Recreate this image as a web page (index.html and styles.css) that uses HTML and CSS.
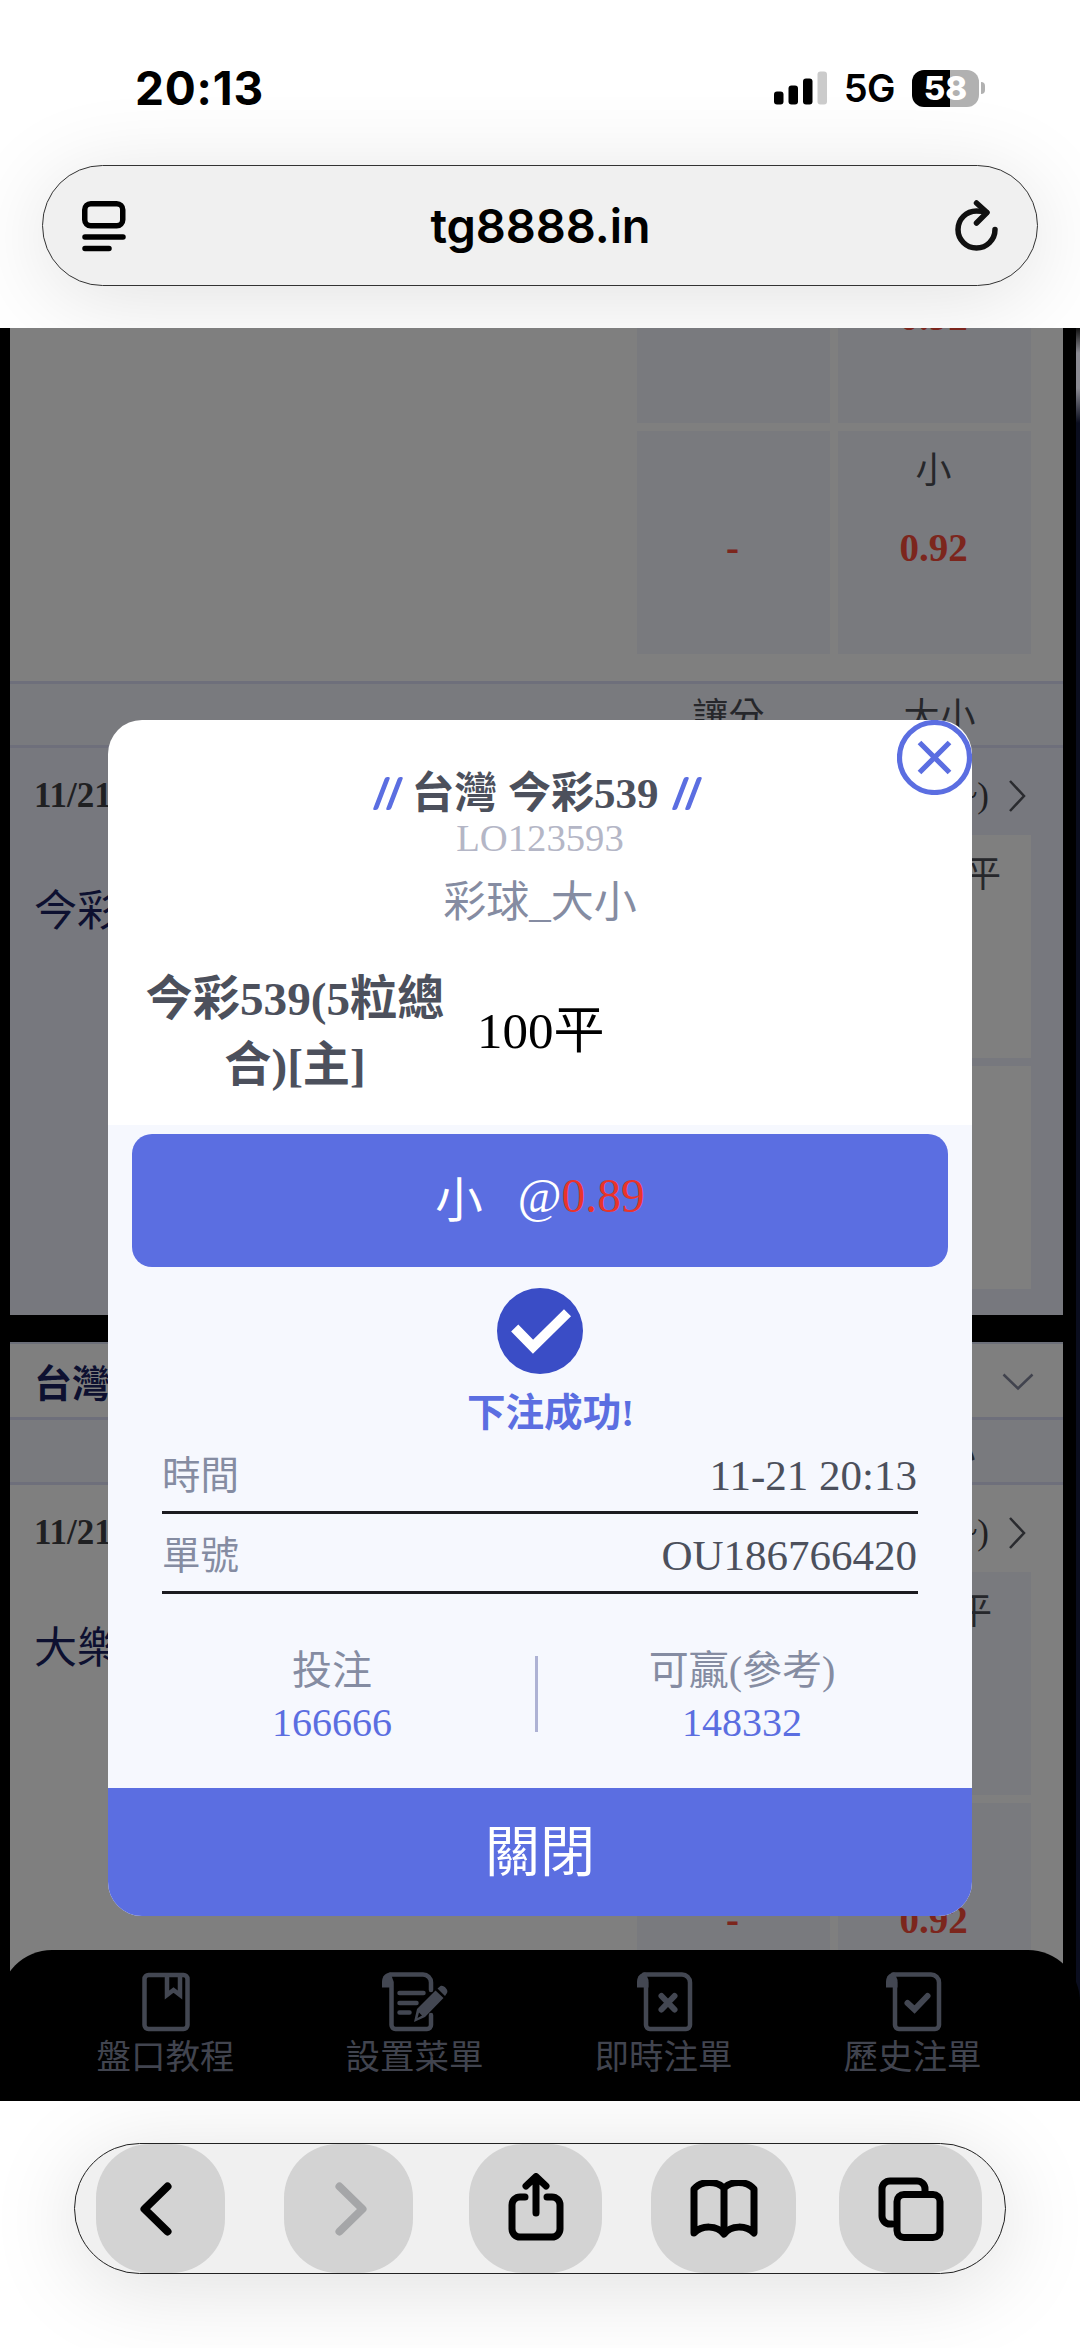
FILE: index.html
```html
<!DOCTYPE html>
<html lang="zh-Hant">
<head>
<meta charset="utf-8">
<title>tg8888.in</title>
<link rel="stylesheet" href="styles.css">
</head>
<body>
<div class="phone">
  <header class="browser-top">
    <div class="status">
      <span class="clock">20:13</span>
      <span class="status-right">
        <svg class="signal" width="53" height="34" viewBox="0 0 53 34">
          <rect x="0" y="20.500" width="9.500" height="13" rx="3"/>
          <rect x="14.500" y="14.500" width="9.500" height="19" rx="3"/>
          <rect x="29" y="7.500" width="9.500" height="26" rx="3"/>
          <rect x="43.500" y="0.500" width="9.500" height="33" rx="3" fill="#cbcbcb"/>
        </svg>
        <span class="net">5G</span>
        <span class="battery">58</span>
        <span class="battery-tip"></span>
      </span>
    </div>
    <div class="url-bar">
      <svg class="reader" width="44" height="52" viewBox="0 0 44 52" fill="none" stroke="#000" stroke-width="5.500" stroke-linecap="round">
        <rect x="2.750" y="3.750" width="38" height="22" rx="6"/>
        <path d="M3 37h38M3 48.500h24"/>
      </svg>
      <span class="host">tg8888.in</span>
      <svg class="reload" width="44" height="52" viewBox="0 0 44 52" fill="none" stroke="#111" stroke-width="5.500" stroke-linecap="round" stroke-linejoin="round">
        <path d="M40 29.500a18.500 18.500 0 1 1-18.500-18.500c4 0 7 .500 10 1.500"/>
        <path d="M21.500 3l10.500 9.500L21.500 23"/>
      </svg>
    </div>
  </header>

  <main class="page">
    <div class="side-tab"></div>
    <div class="list">
      <section class="odds first">
        <div class="cells">
          <div class="cell"><b>-</b></div>
          <div class="cell"><b>0.92</b></div>
          <div class="cell"><b>-</b></div>
          <div class="cell"><span>小</span><b>0.92</b></div>
        </div>
      </section>
      <div class="cols"><span>讓分</span><span>大小</span></div>
      <section class="odds tinted">
        <div class="when"><b>11/21 20:30</b><span class="more">(更多玩法~)</span>
          <svg width="18" height="32" viewBox="0 0 18 32"><path d="M2 1l14 15L2 31"/></svg></div>
        <div class="team">今彩539</div>
        <div class="cells">
          <div class="cell"></div>
          <div class="cell"><span>大 100平</span></div>
          <div class="cell"></div>
          <div class="cell"></div>
        </div>
      </section>
      <div class="gap"></div>
      <div class="league">台灣 大樂透
        <svg width="32" height="18" viewBox="0 0 32 18"><path d="M1.500 1.500L16 15.500l14.500-14"/></svg></div>
      <div class="cols second"><span>讓分</span><span>大小</span></div>
      <section class="odds">
        <div class="when"><b>11/21 20:30</b><span class="more">(更多玩法~)</span>
          <svg width="18" height="32" viewBox="0 0 18 32"><path d="M2 1l14 15L2 31"/></svg></div>
        <div class="team">大樂透</div>
        <div class="cells">
          <div class="cell"></div>
          <div class="cell"><span>大 75平</span></div>
          <div class="cell"><b>-</b></div>
          <div class="cell"><b>0.92</b></div>
        </div>
      </section>
    </div>

    <nav class="tabs">
      <a class="tab">
        <svg width="70" height="60" viewBox="0 0 70 60"><rect x="13.500" y="3" width="43" height="54" rx="4"/><path d="M36 4v19l6.500-5 6.500 5V4"/></svg>
        <span>盤口教程</span></a>
      <a class="tab">
        <svg width="70" height="60" viewBox="0 0 70 60"><path d="M10.500 2.500H43a8 8 0 0 1 8 8V18M51 43V53a4 4 0 0 1-4 4H15.500a4 4 0 0 1-4-4V10"/><path class="solid" d="M2 15.500V10c0-6 4-9.500 8.500-9.500L13 8v7.500z"/><path d="M19.500 21h24M19.500 31h17M19.500 40.500h10"/><path class="solid" fill-rule="evenodd" d="M34 50l3-13L55.500 18.500l8 7.500L45 45zM37.500 46l4.500-2.500-3-3zM57.500 16.500l3-2.500c3-1.500 8.500 4 6.500 7l-2 3z"/></svg>
        <span>設置菜單</span></a>
      <a class="tab">
        <svg width="70" height="60" viewBox="0 0 70 60"><path d="M15 2.500H53a8 8 0 0 1 8 8V53a4 4 0 0 1-4 4H21a4 4 0 0 1-4-4V10"/><path class="solid" d="M8 15.500V10c0-6 4-9.500 8.500-9.500L19.500 8v7.500z"/><path class="mark" d="M32.500 24L45.500 37.500M45.500 24L32.500 37.500"/></svg>
        <span>即時注單</span></a>
      <a class="tab">
        <svg width="70" height="60" viewBox="0 0 70 60"><path d="M15 2.500H53a8 8 0 0 1 8 8V53a4 4 0 0 1-4 4H21a4 4 0 0 1-4-4V10"/><path class="solid" d="M8 15.500V10c0-6 4-9.500 8.500-9.500L19.500 8v7.500z"/><path class="mark" d="M29.500 31l7 6.500L49.500 24"/></svg>
        <span>歷史注單</span></a>
    </nav>

    <div class="dialog">
      <button class="close" aria-label="close"><svg width="75" height="75" viewBox="0 0 75 75"><circle cx="37.500" cy="37.500" r="35"/><path d="M22.500 22.500l30 30M52.500 22.500l-30 30"/></svg></button>
      <div class="dialog-head">
        <h1><i class="slashes"></i><span>台灣 今彩539</span><i class="slashes"></i></h1>
        <p class="code">LO123593</p>
        <p class="market">彩球_大小</p>
        <div class="pick"><strong>今彩539(5粒總合)[主]</strong><span>100平</span></div>
      </div>
      <div class="dialog-body">
        <div class="bet"><span>小</span><span>@<em>0.89</em></span></div>
        <svg class="ok" width="86" height="86" viewBox="0 0 86 86"><circle cx="43" cy="43" r="43"/><path d="M17.700 40L36 58.700 70.500 24.700"/></svg>
        <p class="success">下注成功!</p>
        <dl class="facts">
          <div><dt>時間</dt><dd>11-21 20:13</dd></div>
          <div><dt>單號</dt><dd>OU186766420</dd></div>
        </dl>
        <div class="amounts">
          <div><span>投注</span><b>166666</b></div>
          <i></i>
          <div><span>可贏(參考)</span><b>148332</b></div>
        </div>
      </div>
      <button class="dismiss">關閉</button>
    </div>
  </main>

  <footer class="browser-bottom">
    <div class="toolbar">
      <span class="tool back"><svg width="32" height="54" viewBox="0 0 32 54"><path d="M27.500 4.500L4.500 27l23 22.500"/></svg></span>
      <span class="tool forward"><svg width="32" height="54" viewBox="0 0 32 54"><path d="M4.500 4.500l23 22.500-23 22.500"/></svg></span>
      <span class="tool share"><svg width="56" height="68" viewBox="0 0 56 68"><path d="M17 24H12a8 8 0 0 0-8 8V56a8 8 0 0 0 8 8H44a8 8 0 0 0 8-8V32a8 8 0 0 0-8-8H39M28 40V4M18 13L28 3.500l10 9.500"/></svg></span>
      <span class="tool book"><svg width="68" height="58" viewBox="0 0 68 58"><path d="M34 8C27 1 12 0 4 9V53C12 45 27 45 34 54C41 45 56 45 64 53V9C56 0 41 1 34 8V53"/></svg></span>
      <span class="tool copies"><svg width="66" height="64" viewBox="0 0 66 64"><path d="M14 47H12a8 8 0 0 1-8-8V12a8 8 0 0 1 8-8H39a8 8 0 0 1 8 8v3"/><rect x="19" y="17.500" width="43" height="43" rx="7"/></svg></span>
    </div>
  </footer>
</div>
</body>
</html>
```
FILE: styles.css
```css
* { box-sizing: border-box; }
body { margin: 0; background: #fff; }
p, h1, dl, dd { margin: 0; }
button { border: 0; padding: 0; background: none; font: inherit; }

.phone {
  width: 1080px;
  height: 2348px;
  overflow: hidden;
  font-family: "Liberation Serif", "Noto Sans CJK TC", serif;
}

/* Browser chrome */
.browser-top {
  height: 328px;
  padding: 63px 42px 0;
  overflow: hidden;
  font-family: Inter, sans-serif;
}
.status {
  display: flex;
  justify-content: space-between;
  align-items: center;
  height: 50px;
  margin: 0 53px 0 93px;
}
.clock { font-size: 46px; font-weight: 700; letter-spacing: 0.800px; }
.status-right { display: flex; align-items: center; }
.net { margin-left: 17px; font-size: 38px; font-weight: 600; letter-spacing: -0.500px; }
.battery {
  width: 67px;
  height: 37px;
  margin-left: 17px;
  border-radius: 12px;
  background: linear-gradient(90deg, #000 57%, #b1b1b1 57%);
  color: #fff;
  font-size: 33px;
  font-weight: 800;
  line-height: 37px;
  text-align: center;
}
.battery-tip { width: 4px; height: 12px; margin-left: 2px; border-radius: 0 4px 4px 0; background: #b1b1b1; }
.url-bar {
  display: flex;
  justify-content: space-between;
  align-items: center;
  height: 121px;
  margin-top: 52px;
  padding: 0 38px 0 39px;
  border: 1.500px solid #333;
  border-radius: 61px;
  background: #f0f0f0;
  box-shadow: 0 12px 90px rgba(0, 0, 0, 0.120);
}
.host { font-size: 47px; font-weight: 600; letter-spacing: -0.100px; }

/* Page under the dialog */
.page { position: relative; height: 1773px; overflow: hidden; background: #000; }
.side-tab {
  position: absolute;
  top: 0;
  right: 0;
  width: 4px;
  height: 1700px;
  background: linear-gradient(#111, #8a8a92 25px, #8a8a92 60px, #0a0d1e 95px);
}
.list { width: 1053px; height: 1700px; margin-left: 10px; overflow: hidden; }
.odds { padding: 0 32px 0 24px; background: #7f7f7f; }
.first { height: 353px; overflow: hidden; }
.first .cells { margin-top: -128px; }
.cells { display: grid; grid-template-columns: 193px 193px; grid-auto-rows: 223px; gap: 8px; justify-content: end; }
.cell {
  display: flex;
  flex-direction: column;
  align-items: center;
  padding: 14px 2px 0 0;
  background: #797a7e;
  color: #26272b;
  font-size: 36px;
  line-height: 52px;
}
.cell span { height: 52px; }
.cell b { margin-top: auto; padding-bottom: 80px; color: #7c261d; font-size: 39px; line-height: 52px; }
.tinted { height: 567px; background: #77787e; }
.tinted .cell { background: #7f7f7f; }
.cols {
  display: grid;
  grid-template-columns: 193px 193px;
  gap: 18px;
  justify-content: end;
  height: 67px;
  padding: 3px 27px 0 0;
  border: solid #6e6f7b;
  border-width: 3px 0;
  background: #797a7e;
  color: #26272b;
  font-size: 36px;
  line-height: 60px;
  text-align: center;
}
.second { height: 68px; }
.when {
  display: flex;
  align-items: center;
  height: 87px;
  padding: 8px 5px 0 0;
  color: #1f2022;
  font-size: 35px;
  line-height: 40px;
}
.more { margin-left: auto; }
.when svg { margin-left: 19px; }
.when path, .league path { fill: none; stroke: #2a2b2f; stroke-width: 2.500; }
.league path { stroke: #41434e; }
.team { height: 0; color: #0d1030; font-size: 43px; line-height: 153px; }
.gap { height: 27px; background: #000; }
.league {
  display: flex;
  justify-content: space-between;
  align-items: center;
  height: 75px;
  padding: 0 29px 0 24px;
  border-top: 2px solid #6c6f79;
  background: #7f7f7f;
  color: #0d1030;
  font-size: 38px;
  font-weight: 700;
}
.league svg { margin-top: 2px; }

/* Site tab bar */
.tabs {
  position: absolute;
  inset: auto 0 0 0;
  display: grid;
  grid-template-columns: repeat(4, 249px);
  height: 151px;
  padding: 22px 41px 0;
  border-radius: 52px 52px 0 0;
  background: #000;
}
.tab { display: flex; flex-direction: column; align-items: center; color: #41444f; font-size: 34.500px; line-height: 50px; }
.tab svg { fill: none; stroke: #434752; stroke-width: 4.500; stroke-linecap: round; }
.tab .solid { fill: #434752; stroke: none; }
.tab .mark { stroke-width: 6; }

/* Bet confirmation */
.dialog {
  position: absolute;
  left: 108px;
  top: 392px;
  width: 864px;
  height: 1196px;
  border-radius: 34px;
  overflow: hidden;
  background: #fff;
}
.close { position: absolute; top: 0; right: 0.500px; width: 75px; height: 75px; }
.close svg { display: block; fill: #fff; stroke: #5b6ee1; stroke-width: 5.200; }
.dialog-head { height: 405px; padding-top: 47px; text-align: center; color: #4c505c; }
h1 { display: flex; justify-content: center; align-items: center; gap: 13px; margin-left: -5px; font-size: 43px; line-height: 54px; }
h1 span { margin-left: -5px; }
.slashes { display: flex; gap: 8px; height: 33px; padding: 0 6px; transform: skewX(-21deg); margin-bottom: 2px; }
.slashes::before, .slashes::after { content: ""; width: 5px; border-radius: 2px; background: #5b6ee1; }
.code { color: #b4b6c6; font-size: 38.700px; line-height: 35px; }
.market { color: #858ca2; font-size: 43px; line-height: 60px; margin-top: 17px; }
.pick { display: flex; align-items: center; height: 132px; margin-top: 33px; padding-left: 33px; }
.pick strong { width: 308px; font-size: 47.200px; line-height: 66px; word-break: break-all; }
.pick span { margin: 0 0 12px 28px; color: #000; font-size: 51px; }
.dialog-body { height: 663px; padding-top: 9px; background: #f6f8fe; }
.bet {
  display: flex;
  justify-content: center;
  align-items: center;
  gap: 35px;
  height: 133px;
  margin: 0 24px;
  padding-bottom: 9px;
  border-radius: 20px;
  background: #5b6ee1;
  color: #fff;
  font-size: 47.500px;
}
.bet em { color: #e9342b; font-style: normal; }
.ok { display: block; margin: 21px auto 0; fill: #3a4dc6; }
.ok path { fill: none; stroke: #fff; stroke-width: 10; }
.success { margin-top: 14px; padding-left: 21px; color: #5b6ee1; font-size: 38.600px; font-weight: 700; line-height: 50px; text-align: center; }
.facts { margin: -5px 54px 0; }
.facts div { display: flex; justify-content: space-between; align-items: center; height: 80.500px; border-bottom: 3px solid #1b1b20; }
.facts dt { color: #858ca2; font-size: 38.500px; }
.facts dd { padding-top: 7px; margin-right: 1px; color: #4c505c; font-size: 43px; }
.amounts { display: grid; grid-template-columns: 406px 3px 408px; padding: 48px 0 0 21px; align-items: center; text-align: center; }
.amounts i { height: 76px; background: #aeb2d4; }
.amounts span { display: block; color: #858ca2; font-size: 40px; line-height: 58px; }
.amounts b { display: block; color: #5b6ee1; font-size: 40px; font-weight: 400; line-height: 45px; }
.dismiss { display: block; width: 100%; height: 128px; background: #5b6ee1; color: #fff; font-size: 55px; line-height: 130px; }

/* Browser toolbar */
.browser-bottom { height: 247px; padding: 42px 74px 0; overflow: hidden; }
.toolbar {
  display: flex;
  height: 131px;
  padding: 0 21px;
  border: 1.500px solid #222;
  border-radius: 66px;
  background: #f0f0f0;
  box-shadow: 0 12px 90px rgba(0, 0, 0, 0.130);
}
.tool { display: flex; align-items: center; justify-content: center; border-radius: 54px; background: #d3d3d3; }
.tool svg { fill: none; stroke: #000; stroke-width: 7; stroke-linecap: round; stroke-linejoin: round; }
.back { width: 129px; padding-right: 9px; }
.forward { width: 129px; margin-left: 59px; padding-left: 5px; }
.share { width: 133px; margin-left: 56px; padding-bottom: 4px; }
.book { width: 145px; margin-left: 49px; }
.copies { width: 143px; margin-left: 43px; }
.back svg, .forward svg { stroke-width: 8; }
.forward svg { stroke: #a5a6a8; }
```
